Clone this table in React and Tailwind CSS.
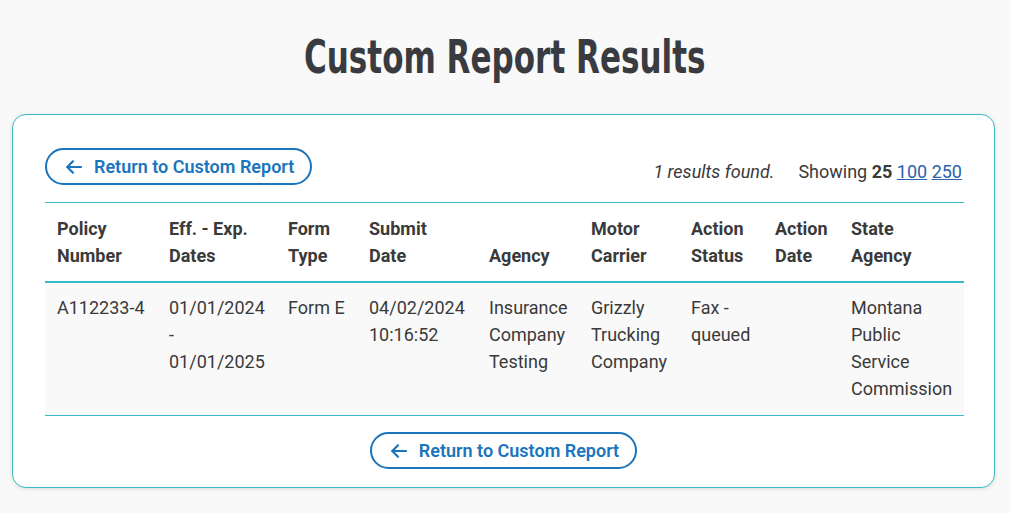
const columns = [
  { label: ["Policy", "Number"], width: "w-[112px]" },
  { label: ["Eff. - Exp.", "Dates"], width: "w-[119px]" },
  { label: ["Form", "Type"], width: "w-[81px]" },
  { label: ["Submit", "Date"], width: "w-[120px]" },
  { label: ["Agency"], width: "w-[102px]" },
  { label: ["Motor", "Carrier"], width: "w-[100px]" },
  { label: ["Action", "Status"], width: "w-[84px]" },
  { label: ["Action", "Date"], width: "w-[76px]" },
  { label: ["State", "Agency"], width: "w-[125px]" },
];

const rows = [
  [
    "A112233-4",
    ["01/01/2024", "-", "01/01/2025"],
    "Form E",
    ["04/02/2024", "10:16:52"],
    ["Insurance", "Company", "Testing"],
    ["Grizzly", "Trucking", "Company"],
    ["Fax -", "queued"],
    "",
    ["Montana", "Public", "Service", "Commission"],
  ],
];

function ReturnButton()
{
  return (
    <button className="inline-flex items-center gap-[12px] h-[37px] pl-[19px] pr-[16px] rounded-full border-2 border-[#1b75bc] text-[#1b75bc] text-[18px] font-semibold bg-white">
      <svg width="16" height="14" viewBox="0 0 16 14" fill="none" stroke="currentColor" strokeWidth="2.2" strokeLinecap="round" strokeLinejoin="round">
        <path d="M15 7H1.5" />
        <path d="M7 1.3 1.3 7 7 12.7" />
      </svg>
      <span>Return to Custom Report</span>
    </button>
  );
}

function Cell({ value })
{
  const lines = Array.isArray(value) ? value : [value];
  return lines.map((line, i) => <div key={i}>{line}</div>);
}

export default function App()
{
  return (
    <div className="min-h-[513px] bg-[#f9f9f9] font-['Roboto',sans-serif] text-[#3a3a3a] px-[12px] pt-[29px]">
      <h1 className="text-center text-[46px] leading-[56px] font-bold font-stretch-condensed text-[#3a3b40] font-['DejaVu_Sans',sans-serif] mb-[29px]">
        <span className="inline-block scale-x-[0.75]">Custom Report Results</span>
      </h1>

      <div className="w-[983px] bg-white border border-[#39b9c9] rounded-[14px] shadow-[0_1px_4px_rgba(0,0,0,0.12)] px-[32px] pt-[33px] pb-[18px]">
        <div className="flex items-center justify-between mb-[17px]">
          <ReturnButton />
          <div className="flex items-center gap-[24px] text-[18px] pt-[10px]">
            <span className="italic">1 results found.</span>
            <span>
              Showing <b className="font-bold">25</b>{" "}
              <a href="#" className="underline text-[#2a63a8]">100</a>{" "}
              <a href="#" className="underline text-[#2a63a8]">250</a>
            </span>
          </div>
        </div>

        <table className="w-[919px] table-fixed border-collapse text-[18px] leading-[27px]">
          <thead>
            <tr className="border-t border-[#39b9c9] border-b-2">
              {columns.map((col, i) => (
                <th
                  key={i}
                  className={`${col.width} text-left align-bottom font-bold px-[12px] pt-[12px] pb-[12px]`}
                >
                  {col.label.map((l, j) => <div key={j}>{l}</div>)}
                </th>
              ))}
            </tr>
          </thead>
          <tbody>
            {rows.map((row, r) => (
              <tr key={r} className="bg-[#f9f9f9] border-b border-[#39b9c9]">
                {row.map((value, c) => (
                  <td key={c} className="align-top px-[12px] pt-[11px] pb-[13px]">
                    <Cell value={value} />
                  </td>
                ))}
              </tr>
            ))}
          </tbody>
        </table>

        <div className="flex justify-center mt-[16px]">
          <ReturnButton />
        </div>
      </div>
    </div>
  );
}
